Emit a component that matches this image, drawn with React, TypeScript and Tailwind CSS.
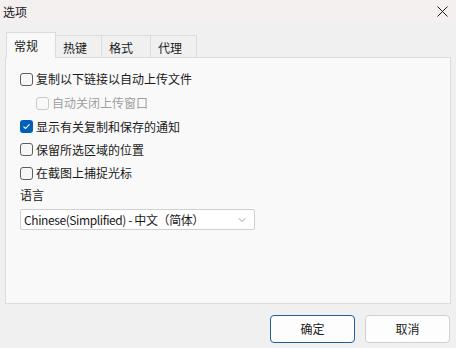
import React from "react";
import { ChevronDown } from "lucide-react";

const font = { fontFamily: '"Noto Sans CJK SC", "Noto Sans", sans-serif' };

function CheckBox({ checked = false, disabled = false }: { checked?: boolean; disabled?: boolean }) {
  if (checked) {
    return (
      <span className="flex h-[13px] w-[13px] items-center justify-center rounded-[3px] bg-[#005fb8]">
        <svg width="9" height="9" viewBox="0 0 9 9" fill="none">
          <path d="M1.8 4.8 L3.6 6.5 L7.2 2.6" stroke="#ffffff" strokeWidth="1.1" strokeLinecap="round" strokeLinejoin="round" />
        </svg>
      </span>
    );
  }
  return (
    <span
      className={
        disabled
          ? "h-[13px] w-[13px] rounded-[3px] border border-[#c9c9c9] bg-[#f9f9f9]"
          : "h-[13px] w-[13px] rounded-[3px] border border-[#5e5e5e] bg-[#f6f6f6]"
      }
    />
  );
}

function Row({
  label,
  checked,
  disabled,
  indent,
  h = "h-6",
}: {
  label: string;
  checked?: boolean;
  disabled?: boolean;
  indent?: boolean;
  h?: string;
}) {
  return (
    <div className={`${h} flex items-center gap-[3px] ${indent ? "pl-4" : ""}`}>
      <CheckBox checked={checked} disabled={disabled} />
      <span className={disabled ? "text-[12px] text-[#a0a0a0]" : "text-[12px] text-[#1a1a1a]"}>{label}</span>
    </div>
  );
}

const tabs = [
  { name: "常规", w: "w-[50px]" },
  { name: "热键", w: "w-[47px]" },
  { name: "格式", w: "w-[50px]" },
  { name: "代理", w: "w-[47px]" },
];

export default function App() {
  return (
    <div className="flex h-[348px] w-[456px] flex-col bg-[#f0f0f0] text-[#1a1a1a]" style={font}>
      {/* title bar */}
      <div className="flex h-[23px] items-center justify-between bg-[#f5f0f0] pl-[3px] pr-[8px]">
        <span className="text-[12px] leading-none">选项</span>
        <svg width="11" height="11" viewBox="0 0 11 11">
          <path d="M0.5 0.5 L10.5 10.5 M10.5 0.5 L0.5 10.5" stroke="#1a1a1a" strokeWidth="1" />
        </svg>
      </div>

      {/* tabs */}
      <div className="relative z-10 flex h-[34px] items-end pl-[6px]">
        {tabs.map((t, i) =>
          i === 0 ? (
            <div
              key={t.name}
              className={`${t.w} -mb-px flex h-[26px] items-center border border-b-0 border-[#dcdcdc] bg-[#f9f9f9] pl-[7px] text-[12px]`}
            >
              {t.name}
            </div>
          ) : (
            <div
              key={t.name}
              className={`${t.w} -ml-px flex h-[22px] items-center border border-b-0 border-[#dcdcdc] bg-[#f0f0f0] pl-[7px] pt-[2px] text-[12px]`}
            >
              {t.name}
            </div>
          )
        )}
      </div>

      {/* panel */}
      <div className="mx-[5px] flex h-[247px] flex-col border border-[#dcdcdc] bg-[#f9f9f9] pl-[14px] pt-[9px]">
        <Row label="复制以下链接以自动上传文件" />
        <Row label="自动关闭上传窗口" disabled indent />
        <Row label="显示有关复制和保存的通知" checked h="h-[23px]" />
        <Row label="保留所选区域的位置" h="h-[23px]" />
        <Row label="在截图上捕捉光标" />
        <div className="flex h-5 items-center text-[12px]">语言</div>
        <div className="mt-[4px] flex h-[21px] w-[235px] items-center justify-between rounded-[2px] border border-[#d0d0d0] bg-white pl-[3px] pr-[6px]">
          <span className="text-[12px] tracking-[-0.4px]">Chinese(Simplified) - 中文（简体）</span>
          <ChevronDown size={12} strokeWidth={1.2} className="text-[#606060]" />
        </div>
      </div>

      {/* buttons */}
      <div className="flex justify-end gap-[10px] pr-[6px] pt-[11px]">
        <button className="flex h-[28px] w-[85px] items-center justify-center rounded-[4px] border border-[#1f5f99] bg-[#fdfdfd] text-[12px]">
          确定
        </button>
        <button className="flex h-[28px] w-[85px] items-center justify-center rounded-[4px] border border-[#d0d0d0] bg-[#fdfdfd] text-[12px]">
          取消
        </button>
      </div>
    </div>
  );
}
